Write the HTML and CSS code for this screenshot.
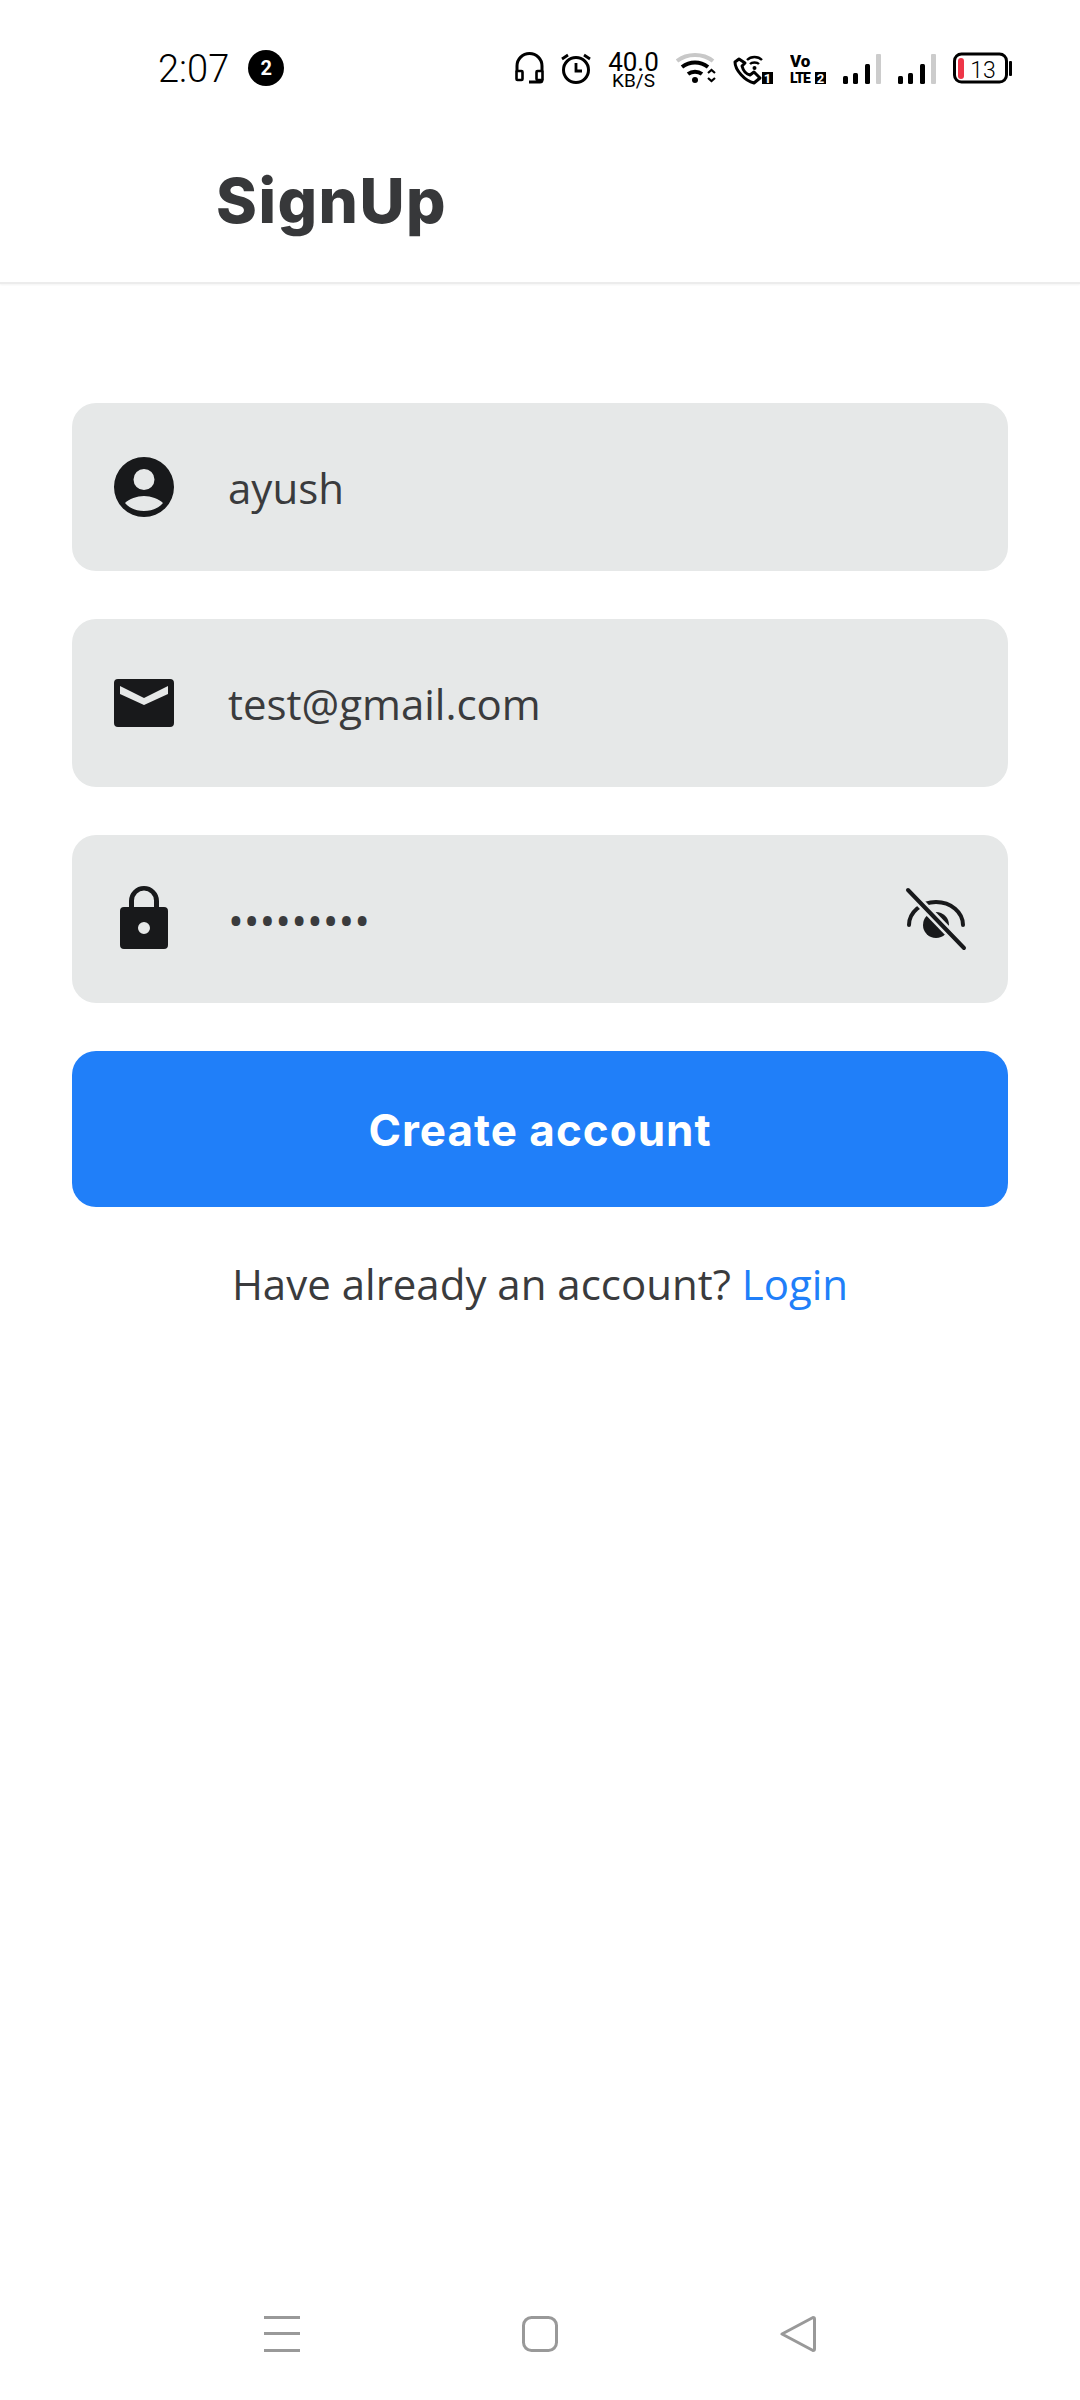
FILE: index.html
```html
<!DOCTYPE html>
<html lang="en">
<head>
    <meta charset="UTF-8">
    <meta name="viewport" content="width=device-width, initial-scale=1.0">
    <title>SignUp</title>
    <link rel="stylesheet" href="styles.css">
</head>
<body>
    <header class="top">
        <div class="status">
            <span class="time">2:07</span>
            <span class="badge">2</span>
            <div class="status-icons">
                <svg width="29" height="32" viewBox="0 0 29 32" fill="none" stroke="#000" stroke-width="3">
                    <path d="M2 20V14a12.500 12.500 0 0 1 25 0v6"/>
                    <rect x="1.500" y="19" width="6" height="9" rx="1" stroke-width="2.600"/>
                    <rect x="21.500" y="19" width="6" height="9" rx="1" stroke-width="2.600"/>
                    <path d="M27 27v1a2 2 0 0 1-2 2h-11"/>
                </svg>
                <svg width="30" height="32" viewBox="0 0 30 32" fill="none" stroke="#000" stroke-width="3">
                    <circle cx="15" cy="18" r="12.500"/>
                    <path d="M15 11v8h6" stroke-width="2.800"/>
                    <path d="M1 7l6-4M29 7l-6-4" stroke-width="2.800"/>
                </svg>
                <div class="speed"><span class="speed-num">40.0</span><span class="speed-unit">KB/S</span></div>
                <svg width="40" height="32" viewBox="0 0 40 32" fill="none" stroke="#000" stroke-width="4">
                    <path d="M1 9c10-8 26-8 36 0" stroke="#c8c8c8"/>
                    <path d="M6 15c8-6 18-6 26 0"/>
                    <path d="M12 22c4-3 10-3 14 0"/>
                    <circle cx="19" cy="28" r="3" fill="#000" stroke="none"/>
                    <path d="M32 21l3.500-3 3.500 3M32 26l3.500 3 3.500-3" stroke-width="2.200"/>
                </svg>
                <svg width="40" height="36" viewBox="0 0 40 36" fill="none" stroke="#000" stroke-width="3">
                    <path d="M6 7L2 10c0 8 10 19 19 21l6-5-6-6-4 3c-4-1-7-5-8-9l3-3z" stroke-linejoin="round"/>
                    <path d="M14 8c4-4 11-4 15 0M17 12c2-2 7-2 9 0" stroke-width="2.400"/>
                    <circle cx="21.500" cy="16" r="2" fill="#000" stroke="none"/>
                    <rect x="29" y="20" width="11" height="12" fill="#000" stroke="none"/>
                    <text x="34.500" y="30.500" class="tiny" text-anchor="middle" fill="#fff" stroke="none">1</text>
                </svg>
                <svg width="36" height="36" viewBox="0 0 36 36">
                    <text x="0" y="15" class="vo">Vo</text>
                    <text x="0" y="31" class="lte">LTE</text>
                    <rect x="25" y="20" width="11" height="12" fill="#000"/>
                    <text x="30.500" y="30.500" class="tiny" text-anchor="middle" fill="#fff">2</text>
                </svg>
                <svg width="38" height="32" viewBox="0 0 38 32">
                    <rect x="0" y="24" width="5" height="8" rx="1.500"/>
                    <rect x="10" y="21" width="5" height="11" rx="1.500"/>
                    <rect x="22" y="12" width="5" height="20" rx="1.500"/>
                    <rect x="33" y="2" width="5" height="30" rx="1" fill="#ccc"/>
                </svg>
                <svg width="38" height="32" viewBox="0 0 38 32">
                    <rect x="0" y="24" width="5" height="8" rx="1.500"/>
                    <rect x="10" y="21" width="5" height="11" rx="1.500"/>
                    <rect x="22" y="12" width="5" height="20" rx="1.500"/>
                    <rect x="33" y="2" width="5" height="30" rx="1" fill="#ccc"/>
                </svg>
                <svg width="59" height="32" viewBox="0 0 59 32">
                    <rect x="1.500" y="2" width="52" height="28" rx="7" fill="none" stroke="#000" stroke-width="3"/>
                    <rect x="5" y="6" width="6" height="21" rx="3" fill="#ee3648"/>
                    <text x="30" y="26" class="batt" text-anchor="middle">13</text>
                    <rect x="56" y="9" width="3" height="15" rx="1"/>
                </svg>
            </div>
        </div>
        <h1 class="title">SignUp</h1>
    </header>

    <main class="form">
        <div class="field">
            <svg class="field-icon" width="72" height="72" viewBox="0 0 72 72" fill="#18191b">
                <path fill-rule="evenodd" d="M36 6a30 30 0 1 0 0 60a30 30 0 0 0 0-60zM36 18a10.500 10.500 0 1 1 0 21a10.500 10.500 0 0 1 0-21zM17 52c4-4 12-7 19-7s15 3 19 7c-4 5-11 8-19 8s-15-3-19-8z"/>
            </svg>
            <span class="field-text">ayush</span>
        </div>
        <div class="field">
            <svg class="field-icon" width="72" height="72" viewBox="0 0 72 72" fill="#18191b">
                <path fill-rule="evenodd" d="M10 12h52a4 4 0 0 1 4 4v40a4 4 0 0 1-4 4H10a4 4 0 0 1-4-4V16a4 4 0 0 1 4-4zM12 19v8l24 11 24-11v-8L36 31z"/>
            </svg>
            <span class="field-text">test@gmail.com</span>
        </div>
        <div class="field">
            <svg class="field-icon" width="72" height="72" viewBox="0 0 72 72" fill="#18191b">
                <path fill-rule="evenodd" d="M16 24h5v-6a15 15 0 0 1 30 0v6h5a4 4 0 0 1 4 4v34a4 4 0 0 1-4 4H16a4 4 0 0 1-4-4V28a4 4 0 0 1 4-4zM26 24h20v-6.500a10 10 0 0 0-20 0zM36 39a6 6 0 1 0 0 12a6 6 0 0 0 0-12z"/>
            </svg>
            <span class="field-text pass">•••••••••</span>
            <svg class="eye" width="72" height="72" viewBox="0 0 72 72" fill="none">
                <path d="M9 42a27 23 0 0 1 54 0" stroke="#18191b" stroke-width="4" stroke-linecap="round"/>
                <circle cx="36" cy="42" r="13" fill="#18191b"/>
                <path d="M8 7l56 58" stroke="#e6e8e8" stroke-width="9"/>
                <path d="M8 7l56 58" stroke="#18191b" stroke-width="4" stroke-linecap="round"/>
            </svg>
        </div>
        <button class="submit" type="button">Create account</button>
        <p class="switch">Have already an account? <a class="switch-link" href="#">Login</a></p>
    </main>

    <nav class="navbar">
        <svg width="36" height="36" viewBox="0 0 36 36" fill="#999">
            <rect x="0" y="0" width="36" height="3"/>
            <rect x="0" y="16" width="36" height="3"/>
            <rect x="0" y="33" width="36" height="3"/>
        </svg>
        <svg width="36" height="36" viewBox="0 0 36 36" fill="none" stroke="#999" stroke-width="3">
            <rect x="1.500" y="1.500" width="33" height="33" rx="8"/>
        </svg>
        <svg width="36" height="36" viewBox="0 0 36 36" fill="none" stroke="#999" stroke-width="3" stroke-linejoin="round">
            <path d="M2 18L33 1.500a1.500 1.500 0 0 1 1.500 1.500v30a1.500 1.500 0 0 1-1.500 1.500z"/>
        </svg>
    </nav>
</body>
</html>
```

FILE: styles.css
```css
* {
    box-sizing: border-box;
}

body {
    margin: 0;
    width: 1080px;
    height: 2400px;
    background: #fff;
    display: flex;
    flex-direction: column;
    font-family: "Open Sans", sans-serif;
    color: #3a3b3d;
}

.top {
    height: 284px;
    border-bottom: 2px solid #ececec;
    box-shadow: 0 1px 2px rgba(0, 0, 0, 0.05);
}

.status {
    height: 90px;
    padding: 47px 68px 0 158px;
    display: flex;
    align-items: flex-start;
}

.time {
    font-family: Roboto, sans-serif;
    font-weight: 300;
    font-size: 38px;
    line-height: 44px;
    color: #000;
}

.badge {
    width: 36px;
    height: 36px;
    margin: 3px 0 0 19px;
    border-radius: 50%;
    background: #000;
    color: #fff;
    font-family: Roboto, sans-serif;
    font-weight: 700;
    font-size: 20px;
    line-height: 36px;
    text-align: center;
}

.status-icons {
    margin-left: auto;
    margin-top: 5px;
    display: flex;
    gap: 17px;
}

.speed {
    width: 51px;
    display: flex;
    flex-direction: column;
    align-items: center;
    font-family: Roboto, sans-serif;
    color: #000;
}

.speed-num {
    font-size: 26px;
    line-height: 21px;
}

.speed-unit {
    font-size: 19px;
    line-height: 15px;
}

.tiny {
    font-family: Roboto, sans-serif;
    font-weight: 700;
    font-size: 13px;
}

.vo {
    font-family: Roboto, sans-serif;
    font-weight: 900;
    font-size: 17px;
}

.lte {
    font-family: Roboto, sans-serif;
    font-weight: 900;
    font-size: 14px;
    letter-spacing: -1px;
}

.batt {
    font-family: Roboto, sans-serif;
    font-weight: 300;
    font-size: 23px;
}

.title {
    margin: 0;
    padding: 72px 0 0 216px;
    font-family: Inter, sans-serif;
    font-weight: 800;
    font-size: 62px;
    line-height: 78px;
    letter-spacing: 1.5px;
    color: #37383a;
}

.form {
    padding: 119px 72px 0;
    display: flex;
    flex-direction: column;
    gap: 48px;
}

.field {
    height: 168px;
    padding: 0 36px;
    border-radius: 24px;
    background: #e6e8e8;
    display: flex;
    align-items: center;
    gap: 48px;
}

.field-text {
    font-size: 42px;
}

.pass {
    flex: 1;
}

.submit {
    height: 156px;
    padding: 2px 0 0;
    border: 0;
    border-radius: 24px;
    background: #207ff9;
    color: #fff;
    font-family: Inter, sans-serif;
    font-weight: 700;
    font-size: 44px;
    letter-spacing: 1px;
}

.switch {
    margin: 0;
    text-align: center;
    font-size: 42px;
    line-height: 58px;
}

.switch-link {
    color: #207ff9;
    text-decoration: none;
}

.navbar {
    margin-top: auto;
    height: 84px;
    padding-left: 264px;
    display: flex;
    gap: 222px;
}
```
